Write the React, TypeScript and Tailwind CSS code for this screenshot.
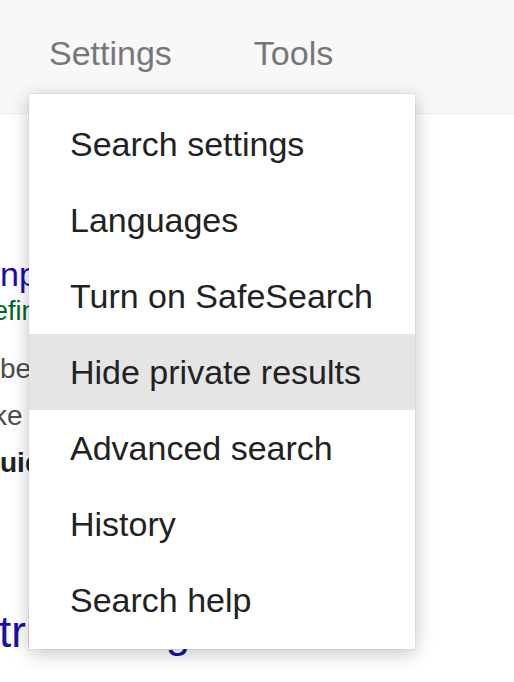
import React from 'react';

const menuItems = [
  'Search settings',
  'Languages',
  'Turn on SafeSearch',
  'Hide private results',
  'Advanced search',
  'History',
  'Search help',
];

const App: React.FC = () => {
  const active = 'Hide private results';

  return (
    <div className="relative h-[682px] w-[514px] overflow-hidden bg-white font-['Liberation_Sans',Arial,sans-serif]">
      {/* top nav */}
      <div className="h-[114px] border-b border-[#ebebeb] bg-[#f8f8f8]">
        <div className="flex gap-[82px] pl-[49px] pt-[36px] text-[34px] leading-none text-[#777777]">
          <span>Settings</span>
          <span>Tools</span>
        </div>
      </div>

      {/* results peeking out behind the menu */}
      <div className="flex flex-col">
        <div className="mt-[143px] text-[34px] leading-none text-[#1a0dab]">npl</div>
        <div className="-ml-[7px] mt-[7px] text-[27px] leading-none text-[#006621]">efin</div>
        <div className="mt-[20px] text-[28px] leading-[47px] text-[#4d4d4d]">
          <div>bet</div>
          <div className="-ml-[7px]">ke</div>
          <div className="font-bold text-[#222]">uid</div>
        </div>
        <div className="-ml-[1px] mt-[124px] flex gap-[20px] text-[44px] leading-none text-[#1a0dab]">
          <span>tries</span>
          <span>Blog</span>
        </div>
      </div>

      {/* settings dropdown */}
      <div className="absolute left-[29px] top-[94px] w-[386px] bg-white py-[12px] pb-[11px] shadow-[0_0_0_1px_rgba(0,0,0,0.04),0_4px_18px_rgba(0,0,0,0.24)]">
        {menuItems.map((item) => (
          <div
            key={item}
            className={`flex h-[76px] items-center pl-[41px] text-[34px] leading-none text-[#222] ${
              item === active ? 'bg-[#e5e5e5]' : ''
            }`}
          >
            {item}
          </div>
        ))}
      </div>
    </div>
  );
};

export default App;
